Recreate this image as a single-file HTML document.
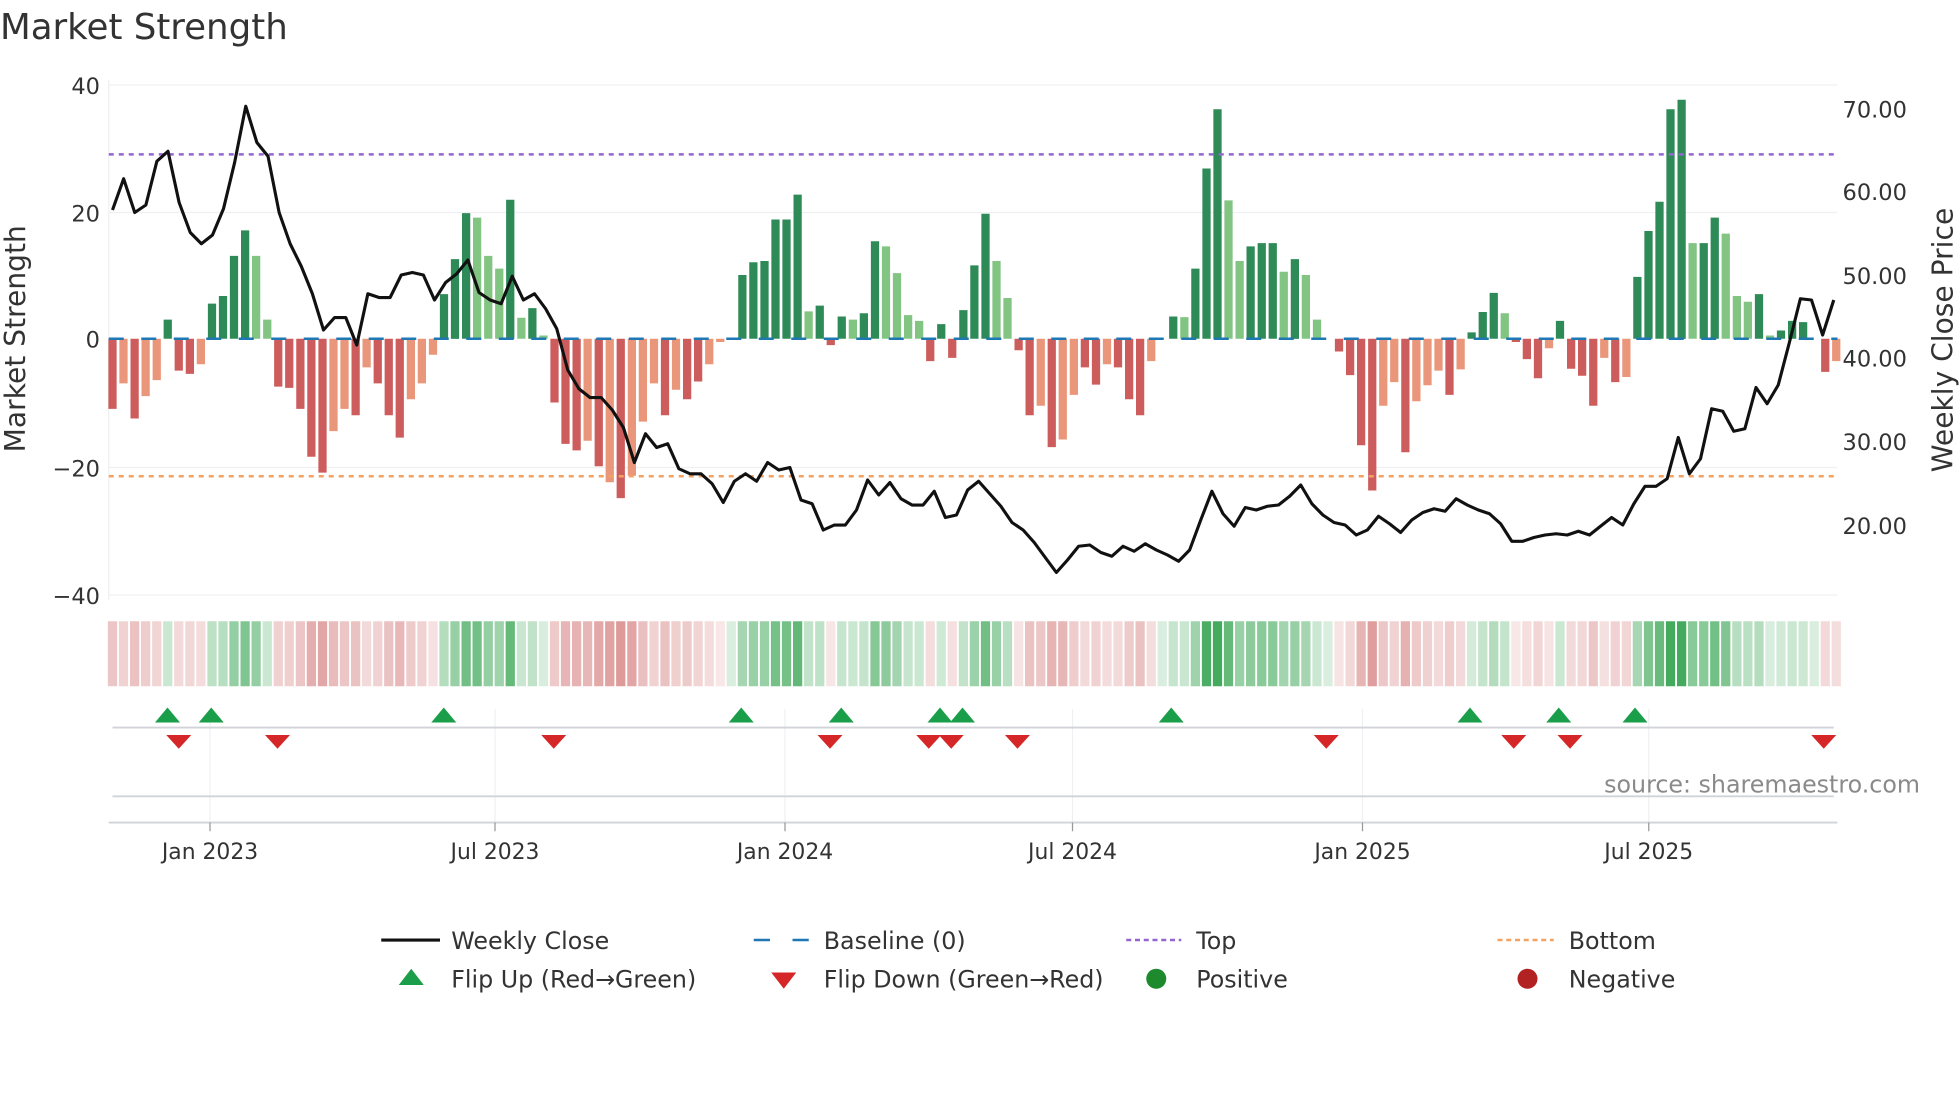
<!DOCTYPE html>
<html><head><meta charset="utf-8"><style>
html,body{margin:0;padding:0;background:#fff;}
svg{display:block;font-family:"DejaVu Sans","Liberation Sans",sans-serif;}
</style></head><body>
<svg id="c" width="1960" height="1102" viewBox="0 0 1568 881.6" xmlns="http://www.w3.org/2000/svg">
<rect width="1568" height="882" fill="#fff"/>
<text x="0" y="31" font-size="28.5" fill="#333">Market Strength</text>
<g stroke="#eef0f3" stroke-width="1">
<line x1="87" y1="68" x2="1470" y2="68"/><line x1="87" y1="170" x2="1470" y2="170"/>
<line x1="87" y1="374" x2="1470" y2="374"/><line x1="87" y1="476" x2="1470" y2="476"/>
</g>
<line x1="87" y1="64" x2="87" y2="480" stroke="#eef0f3"/>
<g font-size="18" fill="#333" text-anchor="end">
<text x="80" y="75">40</text><text x="80" y="177">20</text><text x="80" y="278">0</text>
<text x="80" y="381">−20</text><text x="80" y="483">−40</text>
</g>
<g font-size="18" fill="#333">
<text x="1474" y="94">70.00</text><text x="1474" y="160">60.00</text><text x="1474" y="227">50.00</text>
<text x="1474" y="293">40.00</text><text x="1474" y="360">30.00</text><text x="1474" y="427">20.00</text>
</g>
<text transform="translate(20,271) rotate(-90)" font-size="22.5" fill="#333" text-anchor="middle">Market Strength</text>
<text transform="translate(1562,272) rotate(-90)" font-size="22.5" fill="#333" text-anchor="middle">Weekly Close Price</text>
<g id="bars"></g>
<line x1="87" y1="271" x2="1470" y2="271" stroke="#1f77b4" stroke-width="2" stroke-dasharray="12,14"/>
<line x1="87" y1="123.5" x2="1470" y2="123.5" stroke="#9467d0" stroke-width="2" stroke-dasharray="4,4"/>
<line x1="87" y1="381" x2="1470" y2="381" stroke="#f4a261" stroke-width="2" stroke-dasharray="4,4"/>
<polyline id="price" fill="none" stroke="#111" stroke-width="2.5" stroke-linejoin="round"/>
<g id="heat"></g>
<g stroke="#eef0f3"><line x1="168" y1="567" x2="168" y2="660"/><line x1="396" y1="567" x2="396" y2="660"/><line x1="628" y1="567" x2="628" y2="660"/><line x1="858" y1="567" x2="858" y2="660"/><line x1="1090" y1="567" x2="1090" y2="660"/><line x1="1319" y1="567" x2="1319" y2="660"/></g>
<line x1="90" y1="582" x2="1467" y2="582" stroke="#d0d3d8" stroke-width="1.5"/>
<line x1="90" y1="637" x2="1467" y2="637" stroke="#d0d3d8" stroke-width="1.5"/>
<line x1="87" y1="658" x2="1470" y2="658" stroke="#d0d3d8" stroke-width="1.5"/>
<g stroke="#999"><line x1="168" y1="658" x2="168" y2="665"/><line x1="396" y1="658" x2="396" y2="665"/><line x1="628" y1="658" x2="628" y2="665"/><line x1="858" y1="658" x2="858" y2="665"/><line x1="1090" y1="658" x2="1090" y2="665"/><line x1="1319" y1="658" x2="1319" y2="665"/></g>
<g id="marks"></g>
<g font-size="17.5" fill="#333" text-anchor="middle">
<text x="168" y="687">Jan 2023</text><text x="396" y="687">Jul 2023</text><text x="628" y="687">Jan 2024</text>
<text x="858" y="687">Jul 2024</text><text x="1090" y="687">Jan 2025</text><text x="1319" y="687">Jul 2025</text>
</g>
<text x="1536" y="634" font-size="19" fill="#8a8a8a" text-anchor="end">source: sharemaestro.com</text>
<g font-size="19" fill="#333">
<line x1="305" y1="752" x2="352" y2="752" stroke="#111" stroke-width="2.5"/><text x="361" y="759">Weekly Close</text>
<line x1="603" y1="752" x2="647" y2="752" stroke="#1f77b4" stroke-width="2" stroke-dasharray="13,18"/><text x="659" y="759">Baseline (0)</text>
<line x1="901" y1="752" x2="945" y2="752" stroke="#9467d0" stroke-width="2" stroke-dasharray="4,3"/><text x="957" y="759">Top</text>
<line x1="1198" y1="752" x2="1243" y2="752" stroke="#f4a261" stroke-width="2" stroke-dasharray="4,3"/><text x="1255" y="759">Bottom</text>
<polygon points="319,788 339,788 329,775" fill="#1a9e4a"/><text x="361" y="790">Flip Up (Red→Green)</text>
<polygon points="617,778 637,778 627,791" fill="#d62728"/><text x="659" y="790">Flip Down (Green→Red)</text>
<circle cx="925" cy="783" r="8" fill="#1e8a2e"/><text x="957" y="790">Positive</text>
<circle cx="1222" cy="783" r="8" fill="#b22222"/><text x="1255" y="790">Negative</text>
</g>
</svg>
<script>
var V=[[-11,'r'],[-7,'s'],[-12.5,'r'],[-9,'s'],[-6.5,'s'],[3,'g'],[-5,'r'],[-5.5,'r'],[-4,'s'],[5.5,'g'],[6.7,'g'],[13,'g'],[17,'g'],[13,'l'],[3,'l'],[-7.5,'r'],[-7.7,'r'],[-11,'r'],[-18.5,'r'],[-21,'r'],[-14.5,'s'],[-11,'s'],[-12,'r'],[-4.5,'s'],[-7,'r'],[-12,'r'],[-15.5,'r'],[-9.5,'s'],[-7,'s'],[-2.5,'s'],[7,'g'],[12.5,'g'],[19.7,'g'],[19,'l'],[13,'l'],[11,'l'],[21.8,'g'],[3.3,'l'],[4.8,'g'],[0.5,'l'],[-10,'r'],[-16.5,'r'],[-17.5,'r'],[-16,'s'],[-20,'r'],[-22.5,'s'],[-25,'r'],[-21.5,'s'],[-13,'s'],[-7,'s'],[-12,'r'],[-8,'s'],[-9.5,'r'],[-6.7,'r'],[-4,'s'],[-0.5,'s'],[0,'l'],[10,'g'],[12,'g'],[12.2,'g'],[18.7,'g'],[18.7,'g'],[22.6,'g'],[4.3,'l'],[5.2,'g'],[-1,'r'],[3.5,'g'],[3,'l'],[4,'g'],[15.3,'g'],[14.5,'l'],[10.3,'l'],[3.7,'l'],[2.8,'l'],[-3.5,'r'],[2.3,'g'],[-3,'r'],[4.5,'g'],[11.5,'g'],[19.6,'g'],[12.2,'l'],[6.4,'l'],[-1.8,'r'],[-12,'r'],[-10.5,'s'],[-17,'r'],[-15.8,'s'],[-8.8,'s'],[-4.5,'r'],[-7.2,'r'],[-4,'s'],[-4.5,'r'],[-9.5,'r'],[-12,'r'],[-3.5,'s'],[0,'l'],[3.5,'g'],[3.4,'l'],[11,'g'],[26.7,'g'],[36,'g'],[21.7,'l'],[12.2,'l'],[14.5,'g'],[15,'g'],[15,'g'],[10.5,'l'],[12.5,'g'],[10,'l'],[3,'l'],[0,'l'],[-2,'r'],[-5.7,'r'],[-16.7,'r'],[-23.8,'r'],[-10.5,'s'],[-6.8,'s'],[-17.8,'r'],[-9.8,'s'],[-7.3,'s'],[-5,'s'],[-8.8,'r'],[-4.8,'s'],[1,'g'],[4.2,'g'],[7.2,'g'],[4,'l'],[-0.5,'r'],[-3.2,'r'],[-6.2,'r'],[-1.5,'s'],[2.8,'g'],[-4.7,'r'],[-5.8,'r'],[-10.5,'r'],[-3,'s'],[-6.8,'r'],[-6,'s'],[9.7,'g'],[16.9,'g'],[21.5,'g'],[36,'g'],[37.5,'g'],[15,'l'],[15,'g'],[19,'g'],[16.5,'l'],[6.7,'l'],[5.8,'l'],[7,'g'],[0.5,'l'],[1.3,'g'],[2.8,'g'],[2.6,'g'],[0,'l'],[-5.2,'r'],[-3.5,'s']];
var P=[168,143,170,164,129,121,162,186,195,188,167,130,85,114,125,170,195,213,235,264,254,254,276,235,238,238,220,218,220,240,226,219,208,234,240,243,221,240,235,247,263,296,311,318,318,328,342,370,347,358,355,375,379,379,387,402,385,379,385,370,376,374,400,403,424,420,420,408,384,396,386,399,404,404,393,414,412,392,385,395,405,418,424,434,446,458,448,437,436,442,445,437,441,435,440,444,449,440,416,393,411,421,406,408,405,404,397,388,403,412,418,420,428,424,413,419,426,416,410,407,409,399,404,408,411,419,433,433,430,428,427,428,425,428,421,414,420,403,389,389,383,350,379,367,327,329,345,343,310,323,308,274,239,240,268,240];
var C={g:'#2e8b57',l:'#82c482',r:'#cd5c5c',s:'#e9967a'};
var dx=8.84,h='',hm='',pts=[];
for(var i=0;i<V.length;i++){var x=90+dx*i,v=V[i][0],y0=271,yv=271-v*5.1;
h+='<rect x="'+(x-3.3).toFixed(1)+'" y="'+Math.min(y0,yv).toFixed(1)+'" width="6.6" height="'+Math.abs(yv-y0).toFixed(1)+'" fill="'+C[V[i][1]]+'"/>';
var a=Math.min(1,0.2+Math.abs(v)/28*0.8);
hm+='<rect x="'+(x-3.7).toFixed(1)+'" y="497" width="7.4" height="52" fill="'+(v>=0?'#3aa655':'#cf6b6b')+'" fill-opacity="'+(v>=0?a*0.95:a*0.75).toFixed(2)+'"/>';}
document.getElementById('bars').innerHTML=h;document.getElementById('heat').innerHTML=hm;
for(var j=0;j<P.length;j++){var xx=90+(1467-90)*j/(P.length-1);pts.push(xx.toFixed(1)+','+P[j]);}
document.getElementById('price').setAttribute('points',pts.join(' '));
var U=[134,169,355,593,673,752,770,937,1176,1247,1308],D=[143,222,443,664,743,761,814,1061,1211,1256,1459],m='';
U.forEach(function(x){m+='<polygon points="'+(x-10)+',578 '+(x+10)+',578 '+x+',566" fill="#1a9e4a"/>';});
D.forEach(function(x){m+='<polygon points="'+(x-10)+',588 '+(x+10)+',588 '+x+',599" fill="#d62728"/>';});
document.getElementById('marks').innerHTML=m;
</script>
</body></html>
